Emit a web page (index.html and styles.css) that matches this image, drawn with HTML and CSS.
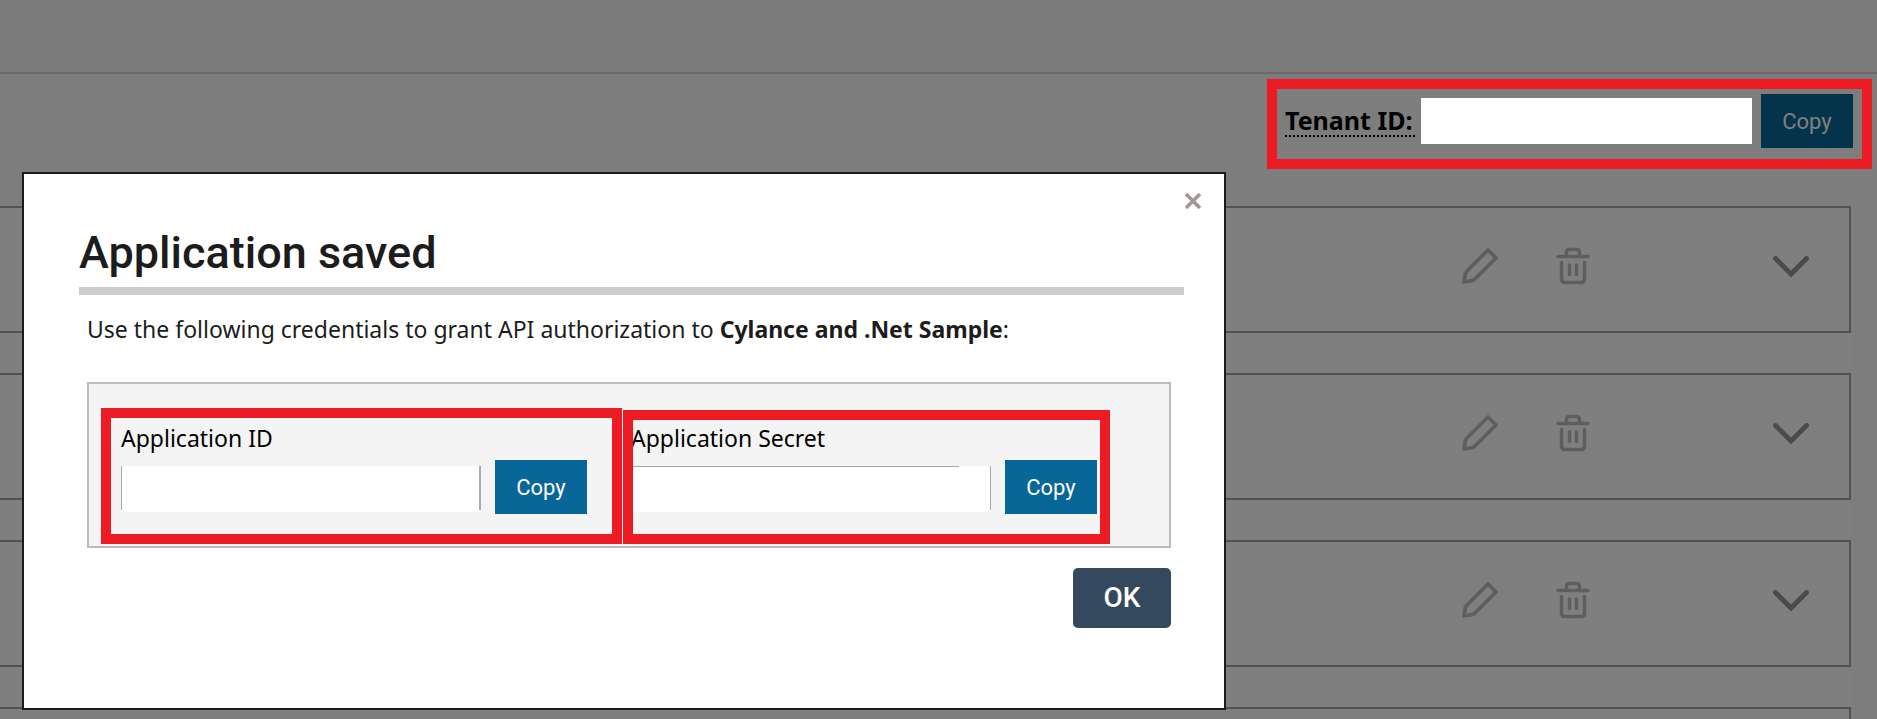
FILE: index.html
```html
<!DOCTYPE html>
<html lang="en">
<head>
<meta charset="utf-8">
<meta name="viewport" content="width=device-width, initial-scale=1">
<title>Application saved</title>
<link rel="stylesheet" href="styles.css">
</head>
<body>
<svg class="sprite" aria-hidden="true">
  <symbol id="pencil" viewBox="0 0 38 38">
    <path d="M27 3 L35 11 L14 32 Q12 34 9 34 L3 35 L4 29 Q4 26 6 24 Z" fill="none" stroke="currentColor" stroke-width="3.8" stroke-linejoin="round"/>
  </symbol>
  <symbol id="trash" viewBox="0 0 34 38">
    <path d="M2 9.500H32 M10.500 9V5.500Q10.500 2.500 13.500 2.500H20.500Q23.500 2.500 23.500 5.500V9 M5.500 15.500V32Q5.500 35.500 9 35.500H25Q28.500 35.500 28.500 32V15.500 M13.500 18V27.500 M20.500 18V27.500" fill="none" stroke="currentColor" stroke-width="3.500" stroke-linecap="round"/>
  </symbol>
  <symbol id="chevron" viewBox="0 0 36 22">
    <path d="M2.500 2.500 L18 18 L33.500 2.500" fill="none" stroke="currentColor" stroke-width="4.800" stroke-linecap="round"/>
  </symbol>
</svg>

<header class="topbar"></header>
<div class="toolbar">
  <div class="tenant">
    <label class="tenant-label" for="tenant-id">Tenant ID:</label>
    <input class="tenant-input" id="tenant-id" type="text" readonly>
    <button class="copy" type="button">Copy</button>
  </div>
</div>
<main class="list">
  <article class="card">
    <button class="icon" type="button" aria-label="Edit"><svg class="pencil"><use href="#pencil"/></svg></button>
    <button class="icon" type="button" aria-label="Delete"><svg class="trash"><use href="#trash"/></svg></button>
    <button class="icon expand" type="button" aria-label="Expand"><svg class="chevron"><use href="#chevron"/></svg></button>
  </article>
  <article class="card">
    <button class="icon" type="button" aria-label="Edit"><svg class="pencil"><use href="#pencil"/></svg></button>
    <button class="icon" type="button" aria-label="Delete"><svg class="trash"><use href="#trash"/></svg></button>
    <button class="icon expand" type="button" aria-label="Expand"><svg class="chevron"><use href="#chevron"/></svg></button>
  </article>
  <article class="card">
    <button class="icon" type="button" aria-label="Edit"><svg class="pencil"><use href="#pencil"/></svg></button>
    <button class="icon" type="button" aria-label="Delete"><svg class="trash"><use href="#trash"/></svg></button>
    <button class="icon expand" type="button" aria-label="Expand"><svg class="chevron"><use href="#chevron"/></svg></button>
  </article>
  <article class="card"></article>
</main>

<div class="backdrop"></div>

<section class="modal" role="dialog" aria-labelledby="title">
  <button class="close" type="button" aria-label="Close"><svg class="close-icon" viewBox="0 0 18 18"><path d="M2 2 L16 16 M16 2 L2 16" fill="none" stroke="currentColor" stroke-width="3.600"/></svg></button>
  <h1 class="title" id="title">Application saved</h1>
  <div class="content">
    <p class="intro">Use the following credentials to grant API authorization to <strong>Cylance and .Net Sample</strong>:</p>
    <div class="credentials">
      <div class="field field-id">
        <label class="field-label" for="app-id">Application ID</label>
        <div class="field-row">
          <input class="field-input" id="app-id" type="text" readonly>
          <button class="copy" type="button">Copy</button>
        </div>
      </div>
      <div class="field field-secret">
        <label class="field-label" for="app-secret">Application Secret</label>
        <div class="field-row">
          <input class="field-input" id="app-secret" type="text" readonly>
          <button class="copy" type="button">Copy</button>
        </div>
      </div>
    </div>
    <div class="actions"><button class="ok" type="button">OK</button></div>
  </div>
</section>
</body>
</html>
```
FILE: styles.css
```css
* { box-sizing: border-box; }

body {
  display: flex;
  flex-direction: column;
  margin: 0;
  height: 100vh;
  overflow: hidden;
  position: relative;
  background: #fafafa;
  color: #1c1c1c;
  font-family: "Noto Sans", sans-serif;
  font-size: 23px;
  line-height: 32px;
}

button, input { font: inherit; margin: 0; border: 0; border-radius: 0; padding: 0; }

.sprite { position: absolute; width: 0; height: 0; }

.topbar { height: 74px; flex-shrink: 0; background: #f7f7f7; border-bottom: 2px solid #d2d2da; }

.toolbar { display: flex; flex-shrink: 0; justify-content: flex-end; padding: 20px 24px 58px; }

.tenant { position: relative; display: flex; align-items: center; }

.tenant-label {
  min-width: 130px;
  color: #000;
  font-size: 25px;
  font-weight: 700;
  line-height: 30px;
  border-bottom: 2px dotted #000;
}

.tenant-input {
  position: relative;
  z-index: 2;
  width: 331px;
  height: 46px;
  margin: 0 9px 0 6px;
  background: #fff;
}

.tenant::after, .field::after {
  content: "";
  position: absolute;
  z-index: 3;
  border: 10px solid #ed1c24;
  pointer-events: none;
}

.tenant::after { inset: -15px -19px -21px -18px; }

.copy {
  width: 92px;
  height: 54px;
  padding-top: 2px;
  background: #086698;
  color: #fff;
  font-family: Roboto, sans-serif;
  font-size: 22px;
}

.list {
  display: flex;
  flex: 1;
  min-height: 0;
  flex-direction: column;
  gap: 40px;
  overflow: hidden;
  margin-right: 26px;
  background: #fff;
}

.card {
  display: flex;
  align-items: center;
  justify-content: flex-end;
  gap: 57px;
  height: 127px;
  flex-shrink: 0;
  padding: 0 40px 8px 0;
  border: 2px solid #a4a4a4;
  border-left: 0;
  background: #fff;
}

.icon { display: flex; background: none; color: #bcbcc0; }
.expand { margin-left: 126px; padding-top: 2px; color: #94949e; }
.pencil { width: 38px; height: 38px; }
.trash { width: 34px; height: 38px; }
.chevron { width: 36px; height: 22px; }

.backdrop { position: fixed; inset: 0; z-index: 1; background: rgba(0, 0, 0, 0.5); }

.modal {
  position: absolute;
  z-index: 4;
  top: 172px;
  left: 22px;
  width: calc(100% - 44px);
  max-width: 1204px;
  padding: 46px 40px 80px 55px;
  border: 2px solid #1c1c1c;
  background: #fff;
}

.close { position: absolute; top: 18px; right: 22px; display: flex; background: none; color: #a39793; }
.close-icon { width: 18px; height: 18px; }

.title {
  margin: 0;
  padding-bottom: 2px;
  border-bottom: 8px solid #cdcdcd;
  font-family: Roboto, sans-serif;
  font-size: 45px;
  font-weight: 500;
  line-height: 65px;
}

.content { padding: 18px 13px 0 8px; }

.intro { margin: 0 0 37px; }

.credentials {
  display: flex;
  padding: 24px 59px 2px 12px;
  border: 2px solid #bbb;
  background: #f4f4f4;
}

.field { position: relative; padding: 14px 11px 30px 20px; }
.field-id { width: 521px; }
.field-secret { width: 488px; padding-left: 9px; }
.field::after { inset: 0; }
.field-secret::after { inset: 2px 0 0 1px; }

.field-label { display: block; color: #000; margin-bottom: 6px; }
.field-row { display: flex; align-items: flex-end; gap: 14px; }

.field-input {
  width: 360px;
  height: 46px;
  margin-bottom: 2px;
  background:
    linear-gradient(#aaa, #aaa) 0 0 / 1px 44px no-repeat,
    linear-gradient(#aaa, #aaa) 100% 0 / 2px 44px no-repeat,
    #fff;
}

.field-secret .field-input {
  background:
    linear-gradient(#aaa, #aaa) 0 0 / 328px 1px no-repeat,
    linear-gradient(#aaa, #aaa) 100% 0 / 1px 44px no-repeat,
    #fff;
}

.actions { display: flex; justify-content: flex-end; margin-top: 20px; }

.ok {
  width: 98px;
  height: 60px;
  border-radius: 5px;
  background: #34495e;
  color: #fff;
  font-family: Roboto, sans-serif;
  font-size: 28px;
  font-weight: 500;
}
```
